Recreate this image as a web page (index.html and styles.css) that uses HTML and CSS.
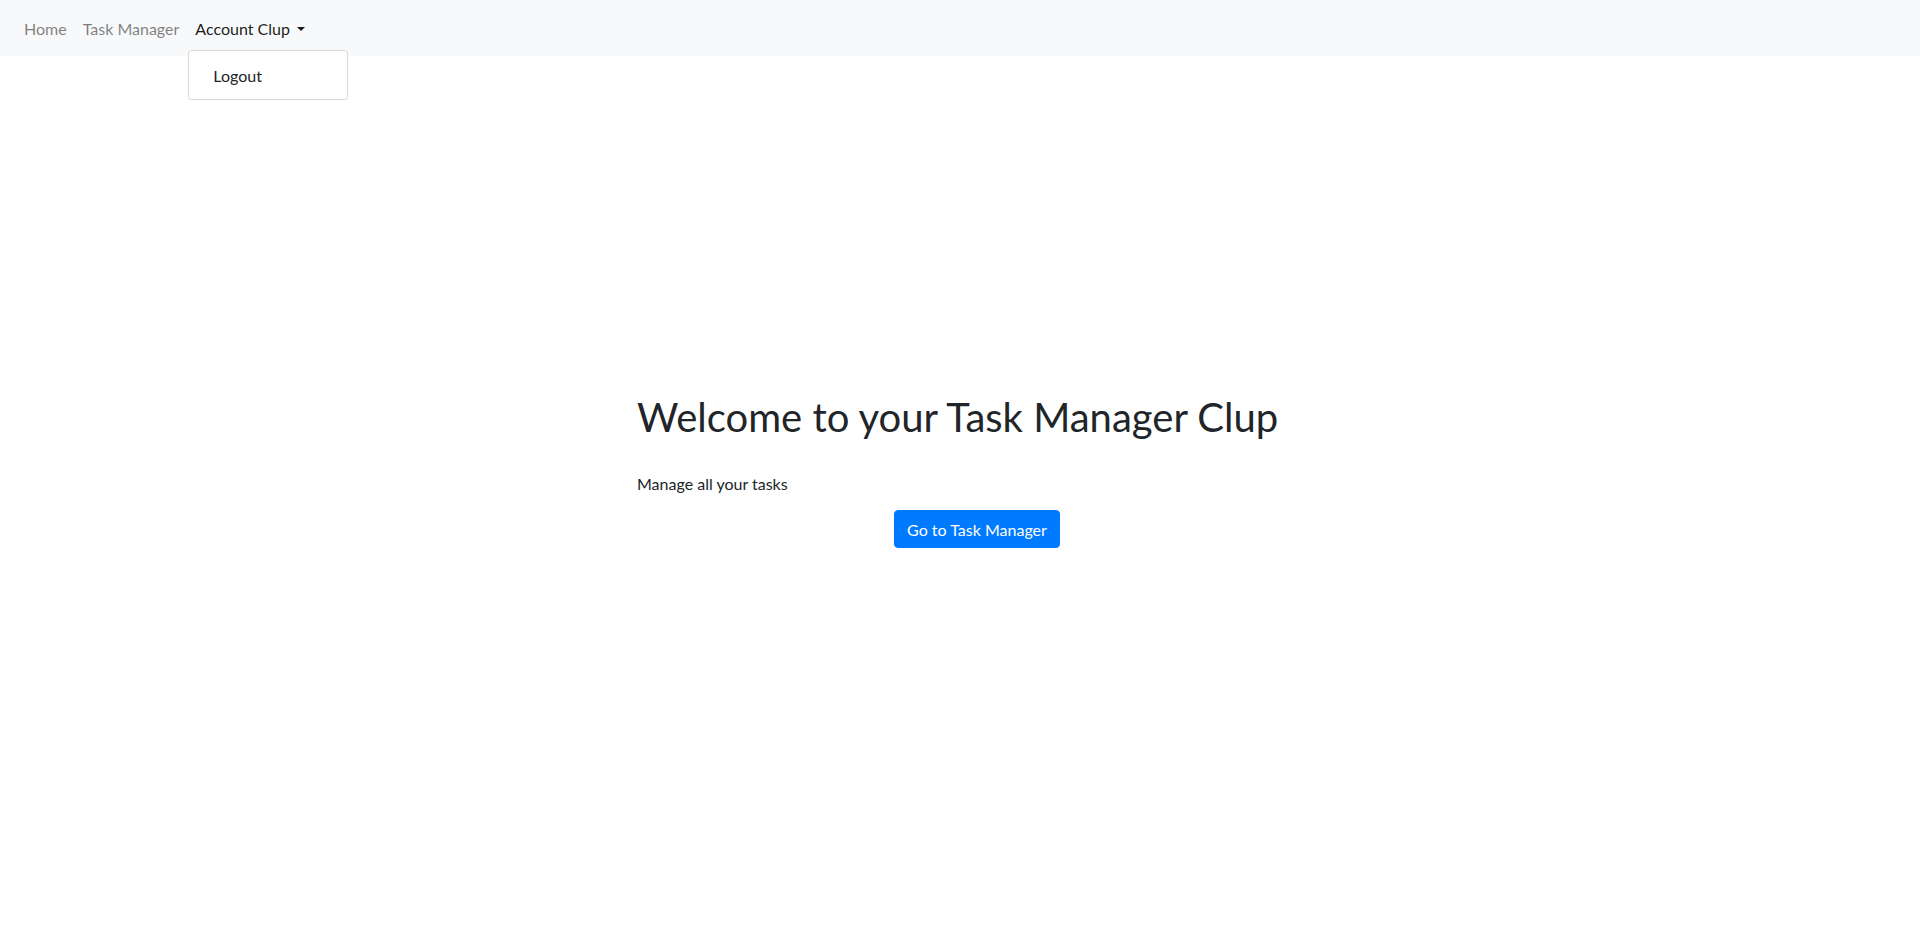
FILE: index.html
```html
<!DOCTYPE html>
<html lang="en">
<head>
<meta charset="utf-8">
<title>Task Manager Clup</title>
<link rel="stylesheet" href="styles.css">
</head>
<body>
<nav class="navbar">
  <ul class="nav">
    <li class="nav-item"><a class="nav-link" href="#">Home</a></li>
    <li class="nav-item"><a class="nav-link" href="#">Task Manager</a></li>
    <li class="nav-item dropdown">
      <a class="nav-link active" href="#">Account Clup<span class="caret"></span></a>
      <div class="dropdown-menu">
        <a class="dropdown-item" href="#">Logout</a>
      </div>
    </li>
  </ul>
</nav>
<main class="main">
  <div class="hero">
    <h1 class="title">Welcome to your Task Manager Clup</h1>
    <p class="lead">Manage all your tasks</p>
    <div class="actions">
      <a class="btn" href="#">Go to Task Manager</a>
    </div>
  </div>
</main>
</body>
</html>
```
FILE: styles.css
```css
* { box-sizing: border-box; }
html, body { margin: 0; padding: 0; }
body {
  font-family: "Lato", "Liberation Sans", sans-serif;
  font-size: 16px;
  line-height: 24px;
  color: #212529;
  background: #fff;
}
a { text-decoration: none; }

.navbar {
  background: #f8f9fa;
  padding: 8px 16px;
  height: 56px;
}
.nav {
  list-style: none;
  margin: 0;
  padding: 0;
  display: flex;
}
.nav-item { position: relative; }
.nav-link {
  display: block;
  padding: 9px 8px 7px;
  color: rgba(0, 0, 0, 0.5);
}
.nav-link.active { color: rgba(0, 0, 0, 0.9); }
.caret {
  display: inline-block;
  margin-left: 7px;
  vertical-align: 4px;
  border-top: 4.8px solid currentColor;
  border-left: 4.8px solid transparent;
  border-right: 4.8px solid transparent;
}
.dropdown-menu {
  position: absolute;
  top: 42px;
  left: 1px;
  min-width: 160px;
  padding: 8px 0;
  background: #fff;
  border: 1px solid rgba(0, 0, 0, 0.15);
  border-radius: 4px;
  z-index: 10;
}
.dropdown-item {
  display: block;
  padding: 5px 24px 3px;
  color: #212529;
}

.main { padding-top: 337px; }
.hero {
  width: 680px;
  margin-left: 637px;
}
.title {
  margin: 0;
  font-size: 40px;
  line-height: 48px;
  font-weight: 400;
}
.lead {
  margin: 31px 0 14px;
}
.actions { text-align: center; }
.btn {
  display: inline-block;
  padding: 7px 12px 5px;
  line-height: 24px;
  color: #fff;
  background: #007bff;
  border: 1px solid #007bff;
  border-radius: 4px;
}
```
